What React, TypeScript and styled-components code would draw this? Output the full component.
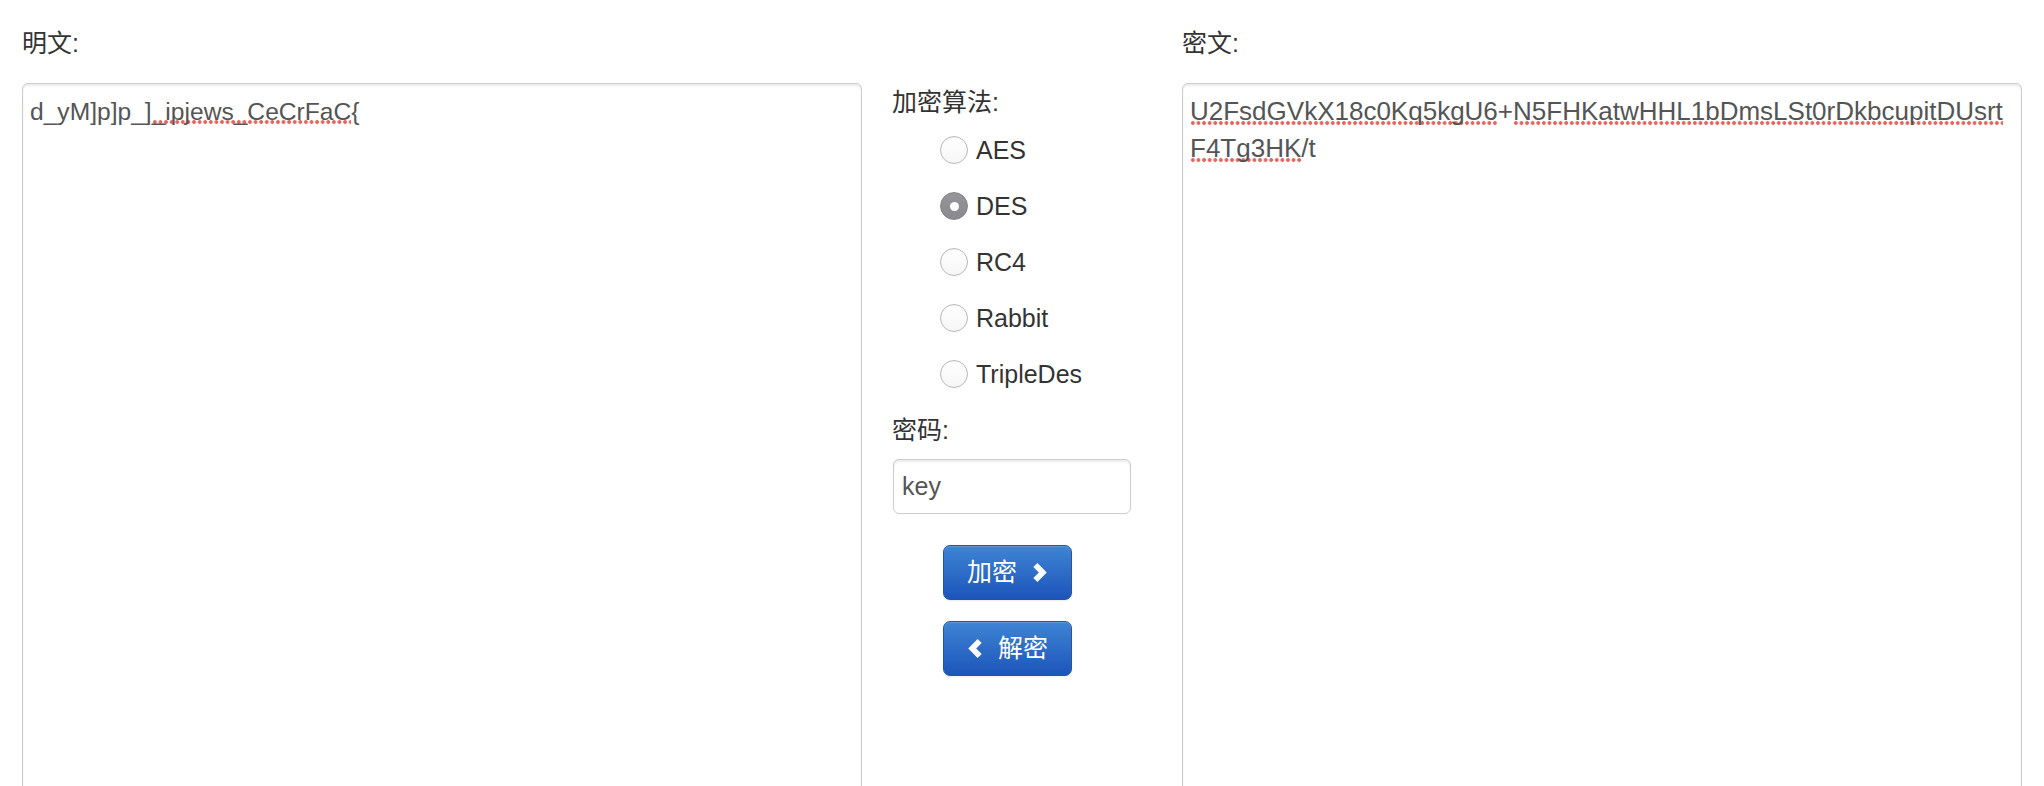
import React from "react";
import styled, { createGlobalStyle } from "styled-components";

const GlobalStyle = createGlobalStyle`
  html, body {
    margin: 0;
    padding: 0;
    overflow: hidden;
    background: #ffffff;
  }
  body {
    font-family: "Liberation Sans", "Noto Sans CJK SC", sans-serif;
    color: #333333;
  }
`;

const Page = styled.div`
  display: grid;
  grid-template-columns: 840px 320px 840px;
  grid-template-rows: 36px auto;
  row-gap: 22px;
  padding: 25px 22px 0;
`;

const FieldLabel = styled.div<{ $col: number }>`
  grid-column: ${(p) => p.$col};
  grid-row: 1;
  font-size: 25px;
  line-height: 36px;
  color: #333333;
`;

const Editor = styled.div<{ $col: number; $size: number }>`
  grid-column: ${(p) => p.$col};
  grid-row: 2;
  box-sizing: border-box;
  height: 720px;
  border: 1px solid #cccccc;
  border-radius: 6px;
  box-shadow: inset 0 2px 2px rgba(0, 0, 0, 0.075);
  padding: 9px 7px 7px;
  font-size: ${(p) => p.$size}px;
  line-height: 37px;
  color: #555555;
  white-space: pre-wrap;
  overflow: hidden;
`;

const Misspelled = styled.span`
  background-image: radial-gradient(
    circle at 2.9px 2.8px,
    rgba(228, 92, 84, 0.95) 0,
    rgba(228, 92, 84, 0.95) 1.6px,
    rgba(228, 92, 84, 0) 2.1px
  );
  background-repeat: repeat-x;
  background-size: 5.6px 5.6px;
  background-position: 0 100%;
  -webkit-box-decoration-break: clone;
  box-decoration-break: clone;
`;

const Controls = styled.div`
  grid-column: 2;
  grid-row: 2;
  display: flex;
  flex-direction: column;
  align-items: flex-start;
  padding: 1px 0 0 30px;
  font-size: 25px;
  color: #333333;
`;

const ControlLabel = styled.div<{ $top: number }>`
  margin-top: ${(p) => p.$top}px;
  line-height: 37px;
`;

const RadioList = styled.div`
  display: flex;
  flex-direction: column;
  margin: 1px 0 0 48px;
`;

const RadioRow = styled.label`
  display: flex;
  align-items: center;
  gap: 8px;
  height: 56px;
  line-height: 37px;
`;

const RadioCircle = styled.span<{ $checked: boolean }>`
  box-sizing: border-box;
  width: 28px;
  height: 28px;
  border-radius: 50%;
  display: flex;
  align-items: center;
  justify-content: center;
  border: 1px solid ${(p) => (p.$checked ? "#85858a" : "#b9b9b9")};
  background: ${(p) =>
    p.$checked
      ? "linear-gradient(#96969a, #8a8a8e)"
      : "linear-gradient(#ffffff, #f6f6f6)"};
  box-shadow: ${(p) =>
    p.$checked ? "none" : "inset 0 1px 1px rgba(0,0,0,0.04)"};

  &::after {
    content: "";
    display: ${(p) => (p.$checked ? "block" : "none")};
    width: 9px;
    height: 9px;
    border-radius: 50%;
    background: #ffffff;
  }
`;

const KeyInput = styled.input`
  box-sizing: border-box;
  margin: 10px 0 0 1px;
  width: 238px;
  height: 55px;
  border: 1px solid #cccccc;
  border-radius: 6px;
  box-shadow: inset 0 2px 2px rgba(0, 0, 0, 0.075);
  padding: 0 8px;
  font-family: "Liberation Sans", "Noto Sans CJK SC", sans-serif;
  font-size: 25px;
  color: #555555;
  background: #ffffff;
  outline: none;
`;

const ActionButton = styled.button<{ $top: number }>`
  box-sizing: border-box;
  margin: ${(p) => p.$top}px 0 0 51px;
  width: 129px;
  height: 55px;
  display: inline-flex;
  align-items: center;
  justify-content: center;
  gap: 14px;
  padding: 0;
  border: 1px solid #2553a8;
  border-radius: 7px;
  background: linear-gradient(#3e84d4, #1d55ba);
  box-shadow: inset 0 1px 0 rgba(255, 255, 255, 0.18),
    0 1px 2px rgba(0, 0, 0, 0.08);
  color: #ffffff;
  font-family: "Liberation Sans", "Noto Sans CJK SC", sans-serif;
  font-size: 25px;
  line-height: 1;
  cursor: pointer;
`;

const Chevron: React.FC<{ dir: "left" | "right" }> = ({ dir }) => (
  <svg
    width="17"
    height="19"
    viewBox="0 0 16 20"
    style={{ transform: dir === "left" ? "scaleX(-1)" : undefined }}
  >
    <polygon
      points="1.5,4.2 5.8,0 15.6,10 5.8,20 1.5,15.8 7.3,10"
      fill="#ffffff"
    />
  </svg>
);

const algorithms = ["AES", "DES", "RC4", "Rabbit", "TripleDes"];

export default function App() {
  return (
    <>
      <GlobalStyle />
      <Page>
        <FieldLabel $col={1}>明文:</FieldLabel>
        <FieldLabel $col={3}>密文:</FieldLabel>

        <Editor $col={1} $size={24.6}>
          d_yM]p]p_]<Misspelled>_ipjews_CeCrFaC</Misspelled>
          {"{"}
        </Editor>

        <Controls>
          <ControlLabel $top={0}>加密算法:</ControlLabel>
          <RadioList>
            {algorithms.map((a) => (
              <RadioRow key={a}>
                <RadioCircle $checked={a === "DES"} />
                {a}
              </RadioRow>
            ))}
          </RadioList>
          <ControlLabel $top={10}>密码:</ControlLabel>
          <KeyInput defaultValue="key" spellCheck={false} />
          <ActionButton $top={31}>
            加密
            <Chevron dir="right" />
          </ActionButton>
          <ActionButton $top={21}>
            <Chevron dir="left" />
            解密
          </ActionButton>
        </Controls>

        <Editor $col={3} $size={26}>
          <Misspelled>U2FsdGVkX18c0Kq5kgU6</Misspelled>+
          <Misspelled>
            N5FHKatwHHL1bDmsLSt0rDkbcupitDUsrt
            <br />
            F4Tg3HK
          </Misspelled>
          /t
        </Editor>
      </Page>
    </>
  );
}
